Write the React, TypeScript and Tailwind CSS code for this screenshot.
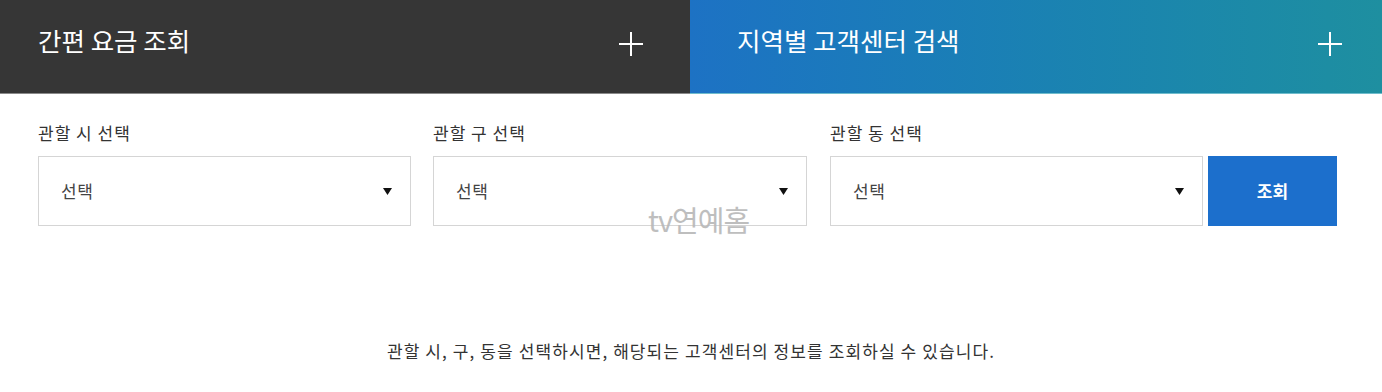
import { ReactNode } from 'react';

const font = { fontFamily: '"Noto Sans CJK KR", "Noto Sans", sans-serif' };

function PlusIcon() {
  return (
    <svg width="24" height="24" viewBox="0 0 24 24" className="text-white">
      <path d="M12 0v24M0 12h24" stroke="currentColor" strokeWidth="2" />
    </svg>
  );
}

function SelectBox({ label, className }: { label: string; className?: string }) {
  return (
    <div className={className}>
      <div className="text-[17px] leading-[24px] tracking-[1px] text-[#333] mb-[11px]">{label}</div>
      <div className="h-[70px] border border-[#d5d5d5] bg-white flex items-center justify-between pl-[22px] pr-[18px]">
        <span className="text-[17px] text-[#444] tracking-[0.5px]">선택</span>
        <svg width="9" height="7" viewBox="0 0 9 7">
          <path d="M0 0h9L4.5 7z" fill="#111" />
        </svg>
      </div>
    </div>
  );
}

function TabHead({ children, className }: { children: ReactNode; className: string }) {
  return <div className={`h-[94px] flex items-start justify-between ${className}`}>{children}</div>;
}

export default function App() {
  return (
    <div className="w-[1382px] h-[392px] bg-white relative overflow-hidden" style={font}>
      {/* Header tabs */}
      <div className="flex">
        <TabHead className="w-[690px] bg-[#363636] border-b border-[#8a8a8a] pl-[38px] pr-[47px] pt-[22px]">
          <span className="text-white text-[25.5px] leading-[36px]">간편 요금 조회</span>
          <span className="mt-[10px]">
            <PlusIcon />
          </span>
        </TabHead>
        <TabHead className="flex-1 bg-gradient-to-r from-[#1d72c4] to-[#1e8fa0] border-b border-[#6fbccc] pl-[47px] pr-[40px] pt-[22px]">
          <span className="text-white text-[25.5px] leading-[36px]">지역별 고객센터 검색</span>
          <span className="mt-[10px]">
            <PlusIcon />
          </span>
        </TabHead>
      </div>

      {/* Search form */}
      <div className="flex items-end pl-[38px] pt-[27px]">
        <SelectBox label="관할 시 선택" className="w-[373px]" />
        <SelectBox label="관할 구 선택" className="w-[374px] ml-[22px]" />
        <SelectBox label="관할 동 선택" className="w-[373px] ml-[23px]" />
        <button className="w-[129px] h-[70px] ml-[5px] bg-[#1c6fcc] text-white text-[17px] font-bold">
          조회
        </button>
      </div>

      <p className="text-center text-[17px] leading-[22px] tracking-[1.1px] text-[#333] mt-[114px]">
        관할 시, 구, 동을 선택하시면, 해당되는 고객센터의 정보를 조회하실 수 있습니다.
      </p>

      {/* watermark */}
      <div className="absolute left-[648px] top-[202px] text-[29px] leading-[34px] text-[#b8b8b8] opacity-90 tracking-[-1px]">
        tv연예홈
      </div>
    </div>
  );
}
